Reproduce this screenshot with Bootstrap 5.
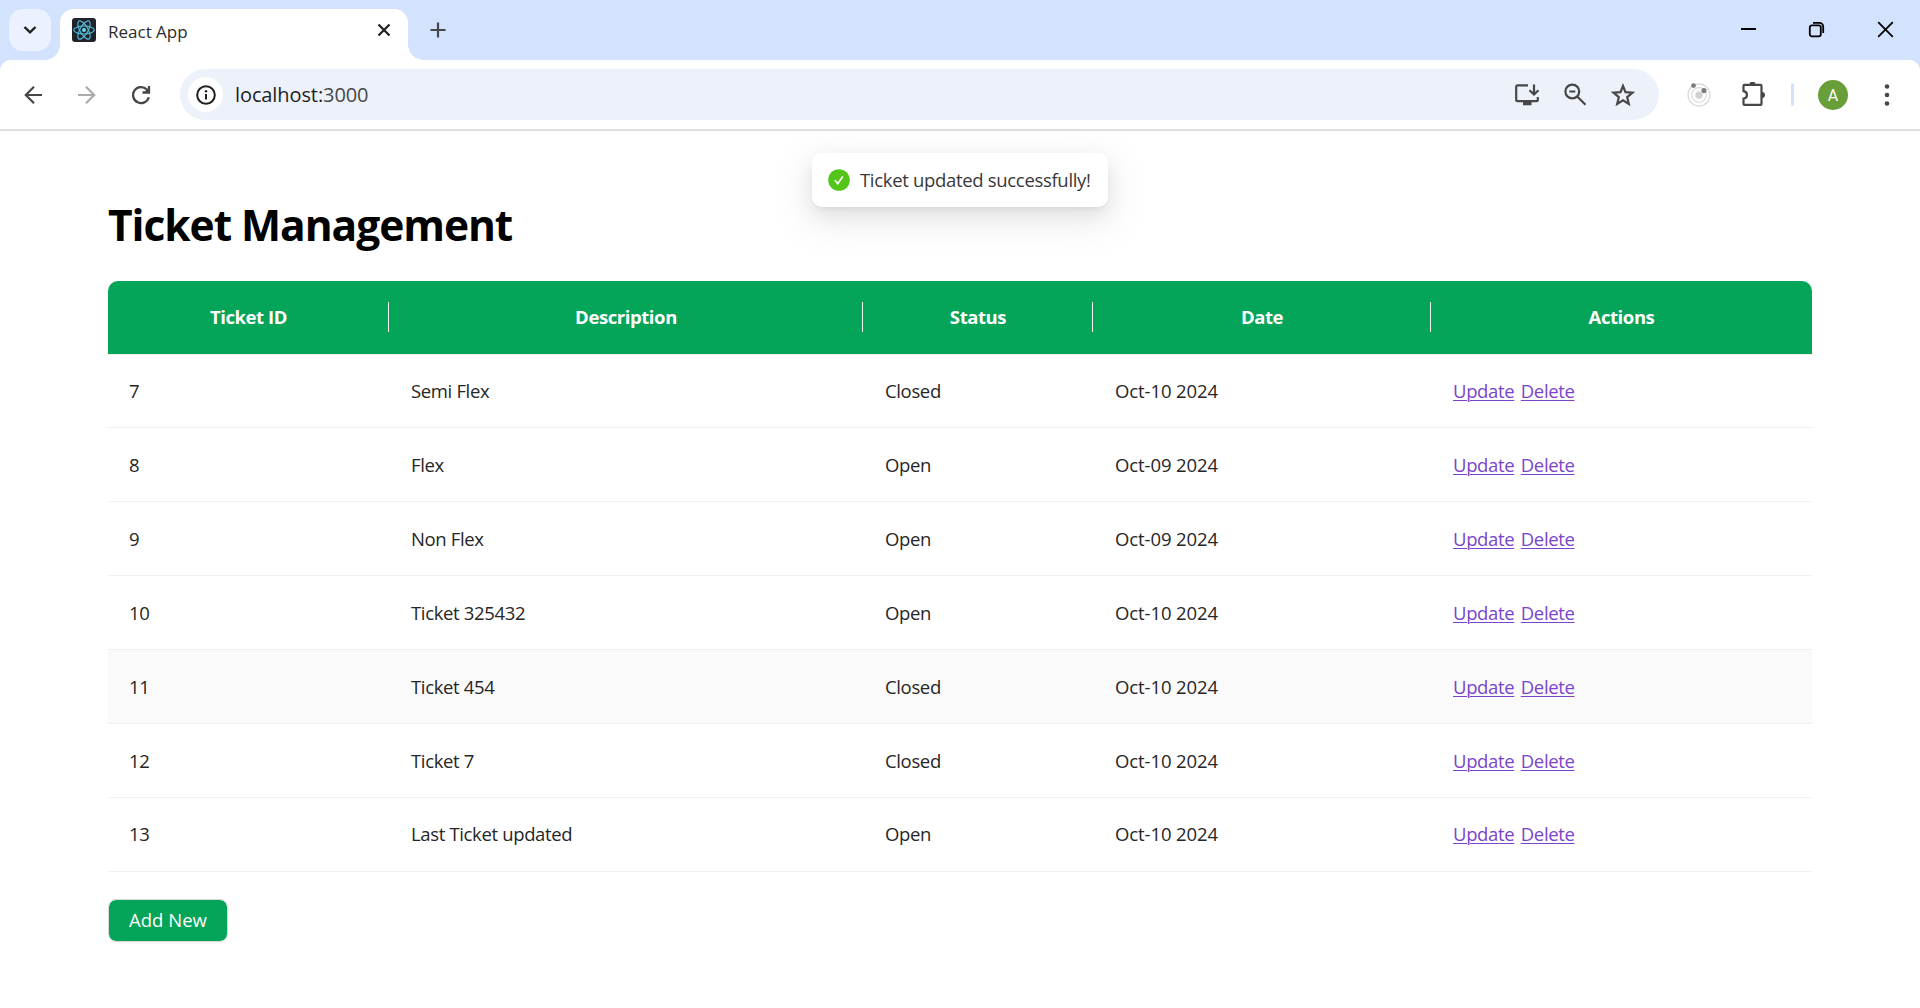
<!DOCTYPE html>
<html lang="en">
<head>
<meta charset="utf-8">
<title>React App</title>
<link href="https://cdn.jsdelivr.net/npm/bootstrap@5.3.0/dist/css/bootstrap.min.css" rel="stylesheet">
<style>
body{font-family:"Open Sans","Noto Sans",sans-serif;font-size:18.5px;font-weight:400;color:#1f1f1f;background:#fff;height:1008px;overflow:hidden}
svg{display:block;flex:none}
.tabstrip{height:60px;background:#d3e3fd;padding:9px 0 0 9px}
.tab-search{width:42px;height:42px;border-radius:14px;background:#ebf1fe}
.browser-tab{width:348px;height:51px;margin-left:9px;background:#fff;border-radius:14px 14px 0 0;padding:9px 17px 18px 12px;position:relative}
.browser-tab::before,.browser-tab::after{content:"";position:absolute;bottom:0;width:15px;height:15px}
.browser-tab::before{left:-15px;background:radial-gradient(circle at 0 0,transparent 14.5px,#fff 15px)}
.browser-tab::after{right:-15px;background:radial-gradient(circle at 100% 0,transparent 14.5px,#fff 15px)}
.tab-title{font-size:17px;line-height:24px;margin-left:12px;padding-top:3px;color:#2b2b2b}
.new-tab{margin:13px 0 0 22px}
.win-controls{margin-top:12px}
.win-controls svg{margin-right:51px}
.win-controls svg:nth-child(2){margin-right:52px}
.win-controls svg:last-child{margin-right:26px}
.strip-under{background:#d3e3fd}
.toolbar{height:71px;border-bottom:2px solid #dfdfdf;background:#fff;border-radius:11px 11px 0 0;padding-left:21px}
.toolbar .nav-ico{margin-right:30px}
.address{width:1479px;height:51px;border-radius:26px;background:#edf1fa;padding:0 24px 0 8px;margin-left:27px}
.site-info{width:35px;height:35px;border-radius:50%;background:#fff}
.url{font-size:20px;margin-left:12px;letter-spacing:-.1px}
.url-port{color:#474747}
.addr-icons{gap:24px}
.ext-box{width:55px}
.ext-first{margin-left:12px}
.ext-first+.ext-box{width:54px}
.tool-sep{width:3px;height:23px;border-radius:2px;background:#d3e3fd;margin-left:11px}
.avatar{width:30px;height:30px;border-radius:50%;background:#689f38;color:#fff;font:400 16px/31px Roboto,sans-serif;margin:0 36px 0 24px}
.toast-note{position:absolute;left:812px;top:153px;width:296px;height:54px;border-radius:10px;background:#fff;padding:0 0 0 16px;box-shadow:0 8px 21px rgba(0,0,0,.08),0 4px 8px -5px rgba(0,0,0,.12),0 12px 37px 11px rgba(0,0,0,.05);color:#383838;white-space:nowrap}
.toast-text{margin-left:10px;letter-spacing:-.32px}
.page{padding:65px 108px 0}
.page h1{font-size:42.5px;font-weight:700;line-height:58px;color:#000;margin:0 0 27px;letter-spacing:-1.05px}
.tickets{table-layout:fixed;width:1704px;margin:0;border-collapse:separate;border-spacing:0;letter-spacing:-.35px}
.tickets th{height:74px;padding:0 0 1px;background:#04a459;color:#fff;text-align:center;vertical-align:middle;border-bottom:1px solid #efefef;font-weight:700;position:relative;letter-spacing:-.42px}
.tickets th:first-child{border-top-left-radius:10px}
.tickets th:last-child{border-top-right-radius:10px}
.tickets thead{background:#efefef}
.tickets th:not(:last-child)::after{content:"";position:absolute;right:0;top:21px;width:1px;height:30px;background:#f0f0f0}
.tickets td{height:74px;padding:0 22px;vertical-align:middle;border-bottom:1px solid #f0f0f0;color:#262626}
.tickets td:first-child{padding-left:21px}
.tickets td:nth-child(4){letter-spacing:-.1px}
.tickets tbody tr:first-child td{height:73px}
.tickets tbody tr:last-child td{padding-bottom:2px}
.tickets tr.hovered td{background:#fafafa}
.tickets a{color:#7a45cc;text-decoration:underline;text-underline-offset:2px;text-decoration-thickness:1px}
.tickets a+a{margin-left:2px}
.add-btn{margin-top:27px;width:120px;height:43px;border-radius:8px;border:1px solid #d9d9d9;background:#04a459;background-clip:padding-box;color:#fff;padding:0 0 2px;font-size:18.5px;box-shadow:0 2px 0 rgba(0,0,0,.02)}
</style>
<script src="https://cdn.jsdelivr.net/npm/bootstrap@5.3.0/dist/js/bootstrap.bundle.min.js"></script>
</head>
<body>
<header>
 <div class="tabstrip d-flex align-items-start">
  <div class="tab-search d-flex align-items-center justify-content-center">
   <svg width="14" height="10" viewBox="0 0 14 10" fill="none" stroke="#1f1f1f" stroke-width="2.4"><path d="M1.5 2 7 7.3 12.500 2"/></svg>
  </div>
  <div class="browser-tab d-flex align-items-center">
   <svg width="24" height="24" viewBox="0 0 24 24"><rect width="24" height="24" rx="3" fill="#20232a"/><g fill="none" stroke="#53c1de" stroke-width="1.100"><ellipse cx="12" cy="12" rx="10.300" ry="4"/><ellipse cx="12" cy="12" rx="10.300" ry="4" transform="rotate(60 12 12)"/><ellipse cx="12" cy="12" rx="10.300" ry="4" transform="rotate(120 12 12)"/></g><circle cx="12" cy="12" r="2" fill="#61dafb"/></svg>
   <span class="tab-title">React App</span>
   <svg class="ms-auto" width="14" height="14" viewBox="0 0 14 14" stroke="#1f1f1f" stroke-width="2.200"><path d="m1.500 1.500 11 11m0-11-11 11"/></svg>
  </div>
  <svg class="new-tab" width="16" height="16" viewBox="0 0 16 16" stroke="#474747" stroke-width="2.200"><path d="M8 .5v15M.5 8h15"/></svg>
  <div class="win-controls d-flex ms-auto">
   <svg width="17" height="17" viewBox="0 0 17 17"><path d="M1 8h15" stroke="#000" stroke-width="2"/></svg>
   <svg width="17" height="17" viewBox="0 0 17 17" fill="none" stroke="#000" stroke-width="1.800"><rect x="1.800" y="4.300" width="11" height="11" rx="2"/><path d="M5 1.800h6.200a4 4 0 0 1 4 4V12"/></svg>
   <svg width="17" height="17" viewBox="0 0 17 17" stroke="#000" stroke-width="1.800"><path d="m1.200 1.200 14.600 14.600m0-14.600L1.200 15.800"/></svg>
  </div>
 </div>
 <div class="strip-under">
 <div class="toolbar d-flex align-items-center">
  <svg class="nav-ico" width="24" height="24" viewBox="0 0 24 24" fill="none" stroke="#474747" stroke-width="2.200"><path d="M21 12H5M13 3.800 4.800 12l8.200 8.200"/></svg>
  <svg class="nav-ico" width="24" height="24" viewBox="0 0 24 24" fill="none" stroke="#ababab" stroke-width="2.200"><path d="M3 12h16M11 3.800l8.200 8.200-8.200 8.200"/></svg>
  <svg width="24" height="24" viewBox="0 0 24 24" fill="none" stroke="#474747" stroke-width="2.300"><path d="M19.800 14.200A8 8 0 1 1 17.800 6.500L20 8.700"/><path d="M20 3v6.500h-6.500"/><path d="M15.500 9 20 4.500V9z" fill="#474747" stroke="none"/></svg>
  <div class="address d-flex align-items-center">
   <div class="site-info d-flex align-items-center justify-content-center">
    <svg width="20" height="20" viewBox="0 0 20 20"><circle cx="10" cy="10" r="8.800" fill="none" stroke="#1f1f1f" stroke-width="2"/><path d="M10 9v5.500" stroke="#1f1f1f" stroke-width="2"/><circle cx="10" cy="6.200" r="1.200" fill="#1f1f1f"/></svg>
   </div>
   <span class="url">localhost:<span class="url-port">3000</span></span>
   <div class="addr-icons d-flex align-items-center ms-auto">
    <svg width="24" height="24" viewBox="0 0 24 24" fill="none" stroke="#474747" stroke-width="2.200"><path d="M13 2.300H2.600a1.400 1.400 0 0 0-1.400 1.400v13a1.400 1.400 0 0 0 1.400 1.400h18.800a1.400 1.400 0 0 0 1.400-1.400V14"/><path d="M19 1.500v9M14.500 7.200l4.500 4.300 4.500-4.300"/><path d="M8 20.500h8.500" stroke-width="3.500"/></svg>
    <svg width="24" height="24" viewBox="0 0 24 24" fill="none" stroke="#474747" stroke-width="2.200"><circle cx="9.300" cy="8.500" r="6.900"/><path d="m14.200 13.500 8.300 8.300M6.300 8.500h6"/></svg>
    <svg width="24" height="24" viewBox="0 0 24 24" fill="none" stroke="#474747" stroke-width="2.200"><path d="m12 3 2.500 6.100 6.900.6-5.200 4.500 1.600 6.700-5.800-3.500-5.800 3.500 1.600-6.700-5.200-4.500 6.900-.6z"/></svg>
   </div>
  </div>
  <div class="ext-box ext-first d-flex justify-content-center">
   <svg width="26" height="26" viewBox="0 0 26 26" fill="none" stroke="#dcdcdc" stroke-width="1.300"><circle cx="13" cy="13" r="11"/><circle cx="13" cy="13" r="7.300"/><circle cx="13" cy="13" r="4" fill="#d0d0d0" stroke="#f0f0f0"/><circle cx="7.500" cy="3.600" r="2.400" fill="#7c7c7c" stroke="none"/><circle cx="18" cy="8.600" r="2.600" fill="#7c7c7c" stroke="none"/></svg>
  </div>
  <div class="ext-box d-flex justify-content-center">
   <svg width="26" height="26" viewBox="0 0 26 26"><path d="M4.500 2.900h16a1 1 0 0 1 1 1v18a1 1 0 0 1-1 1h-16a1 1 0 0 1-1-1v-5.200c2.300-.4 3.500-1.900 3.500-3.800s-1.200-3.400-3.500-3.800V3.900a1 1 0 0 1 1-1z" fill="none" stroke="#474747" stroke-width="2.200"/><path d="M9.500 2.600a3 3 0 0 1 6 0zM22 10a3 3 0 0 1 0 6z" fill="#474747"/></svg>
  </div>
  <div class="tool-sep"></div>
  <div class="avatar text-center">A</div>
  <svg width="6" height="24" viewBox="0 0 6 24" fill="#474747"><circle cx="3" cy="3.500" r="2.300"/><circle cx="3" cy="12" r="2.300"/><circle cx="3" cy="20.500" r="2.300"/></svg>
 </div>
 </div>
</header>
<div class="toast-note d-flex align-items-center">
 <svg width="22" height="22" viewBox="0 0 22 22"><circle cx="11" cy="11" r="10.800" fill="#52c41a"/><path d="m6.800 11.300 3 3.300 5-7" fill="none" stroke="#fff" stroke-width="1.700"/></svg>
 <span class="toast-text">Ticket updated successfully!</span>
</div>
<main class="page">
 <h1>Ticket Management</h1>
 <table class="tickets">
  <colgroup><col style="width:281px"><col style="width:474px"><col style="width:230px"><col style="width:338px"><col style="width:381px"></colgroup>
  <thead><tr><th>Ticket ID</th><th>Description</th><th>Status</th><th>Date</th><th>Actions</th></tr></thead>
  <tbody>
   <tr><td>7</td><td>Semi Flex</td><td>Closed</td><td>Oct-10 2024</td><td><a href="#">Update</a> <a href="#">Delete</a></td></tr>
   <tr><td>8</td><td>Flex</td><td>Open</td><td>Oct-09 2024</td><td><a href="#">Update</a> <a href="#">Delete</a></td></tr>
   <tr><td>9</td><td>Non Flex</td><td>Open</td><td>Oct-09 2024</td><td><a href="#">Update</a> <a href="#">Delete</a></td></tr>
   <tr><td>10</td><td>Ticket 325432</td><td>Open</td><td>Oct-10 2024</td><td><a href="#">Update</a> <a href="#">Delete</a></td></tr>
   <tr class="hovered"><td>11</td><td>Ticket 454</td><td>Closed</td><td>Oct-10 2024</td><td><a href="#">Update</a> <a href="#">Delete</a></td></tr>
   <tr><td>12</td><td>Ticket 7</td><td>Closed</td><td>Oct-10 2024</td><td><a href="#">Update</a> <a href="#">Delete</a></td></tr>
   <tr><td>13</td><td>Last Ticket updated</td><td>Open</td><td>Oct-10 2024</td><td><a href="#">Update</a> <a href="#">Delete</a></td></tr>
  </tbody>
 </table>
 <button class="btn add-btn">Add New</button>
</main>
</body>
</html>
